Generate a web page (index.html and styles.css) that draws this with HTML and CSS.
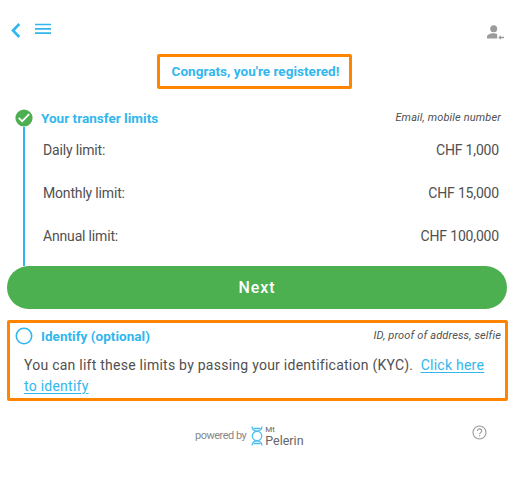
FILE: index.html
```html
<!DOCTYPE html>
<html lang="en">
<head>
<meta charset="utf-8">
<title>Transfer limits</title>
<link rel="stylesheet" href="styles.css">
</head>
<body>
<main class="app">
  <header class="topbar">
    <svg class="back" width="12" height="18" viewBox="0 0 12 18"><path d="M9.300 3 3 9.500l6.300 6.500"/></svg>
    <svg class="menu" width="16" height="12" viewBox="0 0 16 12"><path d="M0 1.500h16M0 5.800h16M0 10.200h16"/></svg>
    <svg class="user" width="19" height="16" viewBox="0 0 19 16"><circle cx="7.700" cy="4.700" r="3.500"/><path d="M1 14.500V13C1 10.500 4.500 9.300 7.700 9.300c1.500 0 2.600.3 3.500.7v4.500zM12.200 13.500l2.700-2.300v1.500H18v1.600h-3.100v1.500z"/></svg>
  </header>
  <h1 class="congrats"><span>Congrats, you're registered!</span></h1>
  <section class="limits">
    <div class="rail">
      <svg width="18" height="18" viewBox="0 0 18 18"><circle cx="9" cy="9" r="8.600" fill="#4caf50"/><path d="m3.700 8.800 3.500 3.400 7-7" fill="none" stroke="#fff" stroke-width="1.700"/></svg>
      <div class="line"></div>
    </div>
    <div class="content">
      <div class="heading"><h2>Your transfer limits</h2><em>Email, mobile number</em></div>
      <dl>
        <div><dt>Daily limit:</dt><dd>CHF 1,000</dd></div>
        <div><dt>Monthly limit:</dt><dd>CHF 15,000</dd></div>
        <div><dt>Annual limit:</dt><dd>CHF 100,000</dd></div>
      </dl>
    </div>
  </section>
  <button class="next">Next</button>
  <section class="identify">
    <div class="heading">
      <svg width="18" height="18" viewBox="0 0 18 18"><circle cx="9" cy="9" r="7.700" fill="none" stroke="#31b7ed" stroke-width="1.600"/></svg>
      <h2>Identify (optional)</h2><em>ID, proof of address, selfie</em>
    </div>
    <p>You can lift these limits by passing your identification (KYC).&nbsp; <a href="#">Click here<br>to identify</a></p>
  </section>
  <footer>
    <span class="powered">powered by</span>
    <svg class="logo" width="12" height="20" viewBox="0 0 12 20"><path d="M1 .5C1 3 3 5.200 6 5.200S11 3 11 .5M2.500 2.500h7M1 19.500C1 17 3 14.800 6 14.800s5 2.200 5 4.700M2.500 17.500h7"/><circle cx="6" cy="10" r="4.700"/></svg>
    <span class="brand"><span class="mt">Mt</span><span class="pelerin">Pelerin</span></span>
    <svg class="help" width="15" height="15" viewBox="0 0 15 15"><circle cx="7.500" cy="7.500" r="6.500"/><path d="M5.400 6c0-2.900 4.300-2.700 4.300-.1 0 1.700-2.100 1.700-2.100 3.400M7.600 10.300v1.300"/></svg>
  </footer>
</main>
</body>
</html>
```
FILE: styles.css
```css
* { box-sizing: border-box; }
body { margin: 0; background: #fff; color: #505050; font-family: Roboto, "Liberation Sans", sans-serif; font-size: 14px; }
.app { width: 514px; height: 487px; overflow: hidden; display: flex; flex-direction: column; }
h1, h2, p, dl, dd { margin: 0; }
h1, h2 { font-size: 13.5px; line-height: 18px; font-weight: 700; color: #31b7ed; white-space: nowrap; letter-spacing: .03px; }
svg { display: block; flex: none; }
.topbar { height: 54px; padding: 21px 9px 0 10px; display: flex; align-items: flex-start; }
.back, .menu { fill: none; stroke: #31b7ed; }
.back { stroke-width: 2.6; }
.menu { margin: 2px 0 0 13px; stroke-width: 1.7; }
.user { margin: 3px 0 0 auto; fill: #9b9b9b; }
.congrats { width: 195px; height: 35px; margin-left: 157px; border: 3px solid #ff8400; border-radius: 2px; display: flex; align-items: center; justify-content: center; padding: 0 0 2px 2px; }
.limits { height: 177px; padding: 20px 13px 0 15px; display: flex; }
.rail { width: 18px; display: flex; flex-direction: column; align-items: center; }
.line { width: 2px; flex: 1; background: #31b7ed; }
.content { flex: 1; padding-left: 8px; }
.heading { display: flex; height: 18px; align-items: center; }
.heading em { margin-left: auto; font-size: 11px; line-height: 18px; white-space: nowrap; letter-spacing: .15px; }
dl { padding: 12px 2px 0; }
dl > div { display: flex; justify-content: space-between; height: 43px; line-height: 22px; }
dt { letter-spacing: -.17px; }
dd { letter-spacing: -.17px; }
.next { width: 500px; height: 43px; flex: none; margin-left: 7px; padding: 0; border: 0; border-radius: 22px; background: #4caf50; color: #fff; font: 500 16px/43px Roboto, sans-serif; letter-spacing: .9px; }
.identify { width: 501px; height: 81px; flex: none; margin: 11px 0 0 7px; padding: 4px 4px 0 5px; border: 3px solid #ff8400; border-radius: 2px; }
.identify h2 { margin-left: 8px; }
.identify p { padding: 10px 0 0 9px; line-height: 20.5px; letter-spacing: .25px; white-space: nowrap; }
a { color: #31b7ed; text-underline-offset: 2px; }
footer { display: flex; padding: 24px 27px 0 195px; color: #888; }
.powered { font-size: 11px; line-height: 22px; white-space: nowrap; letter-spacing: -.5px; }
.logo { margin: 1px 0 0 5px; fill: none; stroke: #4bbcf0; stroke-width: 1.3; }
.brand { display: flex; flex-direction: column; margin-left: 2px; color: #666; }
.mt { font-size: 8px; line-height: 9px; }
.pelerin { font-size: 12.5px; line-height: 14px; }
.help { margin: 0 0 0 auto; fill: none; stroke: #9b9b9b; stroke-width: 1.1; }
```
